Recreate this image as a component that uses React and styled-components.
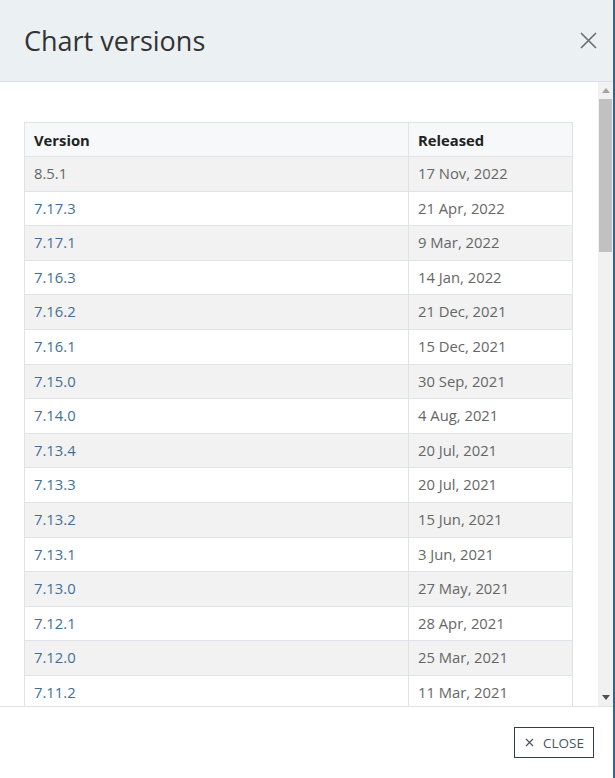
import React from "react";
import styled, { createGlobalStyle } from "styled-components";

const versions = [
  ["8.5.1", "17 Nov, 2022", true],
  ["7.17.3", "21 Apr, 2022"],
  ["7.17.1", "9 Mar, 2022"],
  ["7.16.3", "14 Jan, 2022"],
  ["7.16.2", "21 Dec, 2021"],
  ["7.16.1", "15 Dec, 2021"],
  ["7.15.0", "30 Sep, 2021"],
  ["7.14.0", "4 Aug, 2021"],
  ["7.13.4", "20 Jul, 2021"],
  ["7.13.3", "20 Jul, 2021"],
  ["7.13.2", "15 Jun, 2021"],
  ["7.13.1", "3 Jun, 2021"],
  ["7.13.0", "27 May, 2021"],
  ["7.12.1", "28 Apr, 2021"],
  ["7.12.0", "25 Mar, 2021"],
  ["7.11.2", "11 Mar, 2021"],
];

const GlobalStyle = createGlobalStyle`
  html, body {
    margin: 0;
    padding: 0;
    background: #fff;
  }
  body {
    font-family: "Open Sans", "Noto Sans", sans-serif;
  }
`;

const Modal = styled.div`
  width: 615px;
  height: 778px;
  box-sizing: border-box;
  display: flex;
  flex-direction: column;
  border-right: 2px solid #2f6792;
  background: #fff;
  overflow: hidden;
`;

const Header = styled.div`
  height: 81px;
  flex-shrink: 0;
  display: flex;
  align-items: center;
  justify-content: space-between;
  padding: 0 15px 0 24px;
  background: #ebf0f3;
  border-bottom: 1px solid #d9dfe4;
`;

const Title = styled.h4`
  margin: 0;
  font-size: 27px;
  font-weight: 400;
  color: #333;
`;

const CloseIcon = styled.button`
  border: none;
  background: none;
  padding: 0;
  width: 20px;
  height: 20px;
  display: flex;
  align-items: center;
  justify-content: center;
  cursor: pointer;
`;

const Body = styled.div`
  flex: 1;
  min-height: 0;
  display: flex;
`;

const Content = styled.div`
  flex: 1;
  overflow: hidden;
  padding: 40px 25px 0 24px;
`;

const Table = styled.table`
  width: 100%;
  border-collapse: collapse;
  font-size: 14.8px;
`;

const HeadCell = styled.th`
  text-align: left;
  font-weight: 700;
  color: #222;
  background: #f6f8fa;
  border: 1px solid #dfe3e8;
  padding: 7px 9px 6px;
  line-height: 20px;
  width: ${(p) => p.$w || "auto"};
`;

const Row = styled.tr`
  &:nth-child(odd) {
    background: #f2f2f2;
  }
`;

const Cell = styled.td`
  border: 1px solid #dfe3e8;
  padding: 7px 9px;
  line-height: 19.6px;
  color: ${(p) => (p.$link ? "#3f6f98" : "#666")};
`;

const Track = styled.div`
  width: 15px;
  background: #f1f1f1;
  display: flex;
  flex-direction: column;
  align-items: center;
`;

const Arrow = styled.div`
  width: 15px;
  height: 17px;
  display: flex;
  align-items: center;
  justify-content: center;
  flex-shrink: 0;
`;

const Thumb = styled.div`
  width: 13px;
  height: 153px;
  background: #c1c1c1;
`;

const Spacer = styled.div`
  flex: 1;
`;

const Footer = styled.div`
  height: 72px;
  flex-shrink: 0;
  display: flex;
  justify-content: flex-end;
  align-items: flex-start;
  padding: 20px 19px 0 0;
  border-top: 1px solid #dfe3e8;
  box-sizing: border-box;
`;

const CloseButton = styled.button`
  height: 31px;
  padding: 0 9px 0 10px;
  display: flex;
  align-items: center;
  gap: 9px;
  background: #fff;
  border: 1px solid #2c3e50;
  border-radius: 0;
  font-family: "Open Sans", "Noto Sans", sans-serif;
  font-size: 13.5px;
  color: #4a5560;
  cursor: pointer;
`;

const Triangle = ({ down }) => (
  <svg width="8" height="5" viewBox="0 0 8 5">
    <path d={down ? "M0 0 L8 0 L4 5 Z" : "M0 5 L8 5 L4 0 Z"} fill={down ? "#505050" : "#a3a3a3"} />
  </svg>
);

export default function App() {
  return (
    <>
      <GlobalStyle />
      <Modal>
        <Header>
          <Title>Chart versions</Title>
          <CloseIcon aria-label="close">
            <svg width="17" height="17" viewBox="0 0 17 17">
              <path d="M1 1 L16 16 M16 1 L1 16" stroke="#6b6b6b" strokeWidth="1.6" />
            </svg>
          </CloseIcon>
        </Header>
        <Body>
          <Content>
            <Table>
              <thead>
                <tr>
                  <HeadCell $w="365px">Version</HeadCell>
                  <HeadCell>Released</HeadCell>
                </tr>
              </thead>
              <tbody>
                {versions.map(([v, d, current]) => (
                  <Row key={v}>
                    <Cell $link={!current}>{v}</Cell>
                    <Cell>{d}</Cell>
                  </Row>
                ))}
              </tbody>
            </Table>
          </Content>
          <Track>
            <Arrow>
              <Triangle />
            </Arrow>
            <Thumb />
            <Spacer />
            <Arrow>
              <Triangle down />
            </Arrow>
          </Track>
        </Body>
        <Footer>
          <CloseButton>
            <svg width="9" height="9" viewBox="0 0 9 9">
              <path d="M1 1 L8 8 M8 1 L1 8" stroke="#4a5560" strokeWidth="1.2" />
            </svg>
            CLOSE
          </CloseButton>
        </Footer>
      </Modal>
    </>
  );
}
